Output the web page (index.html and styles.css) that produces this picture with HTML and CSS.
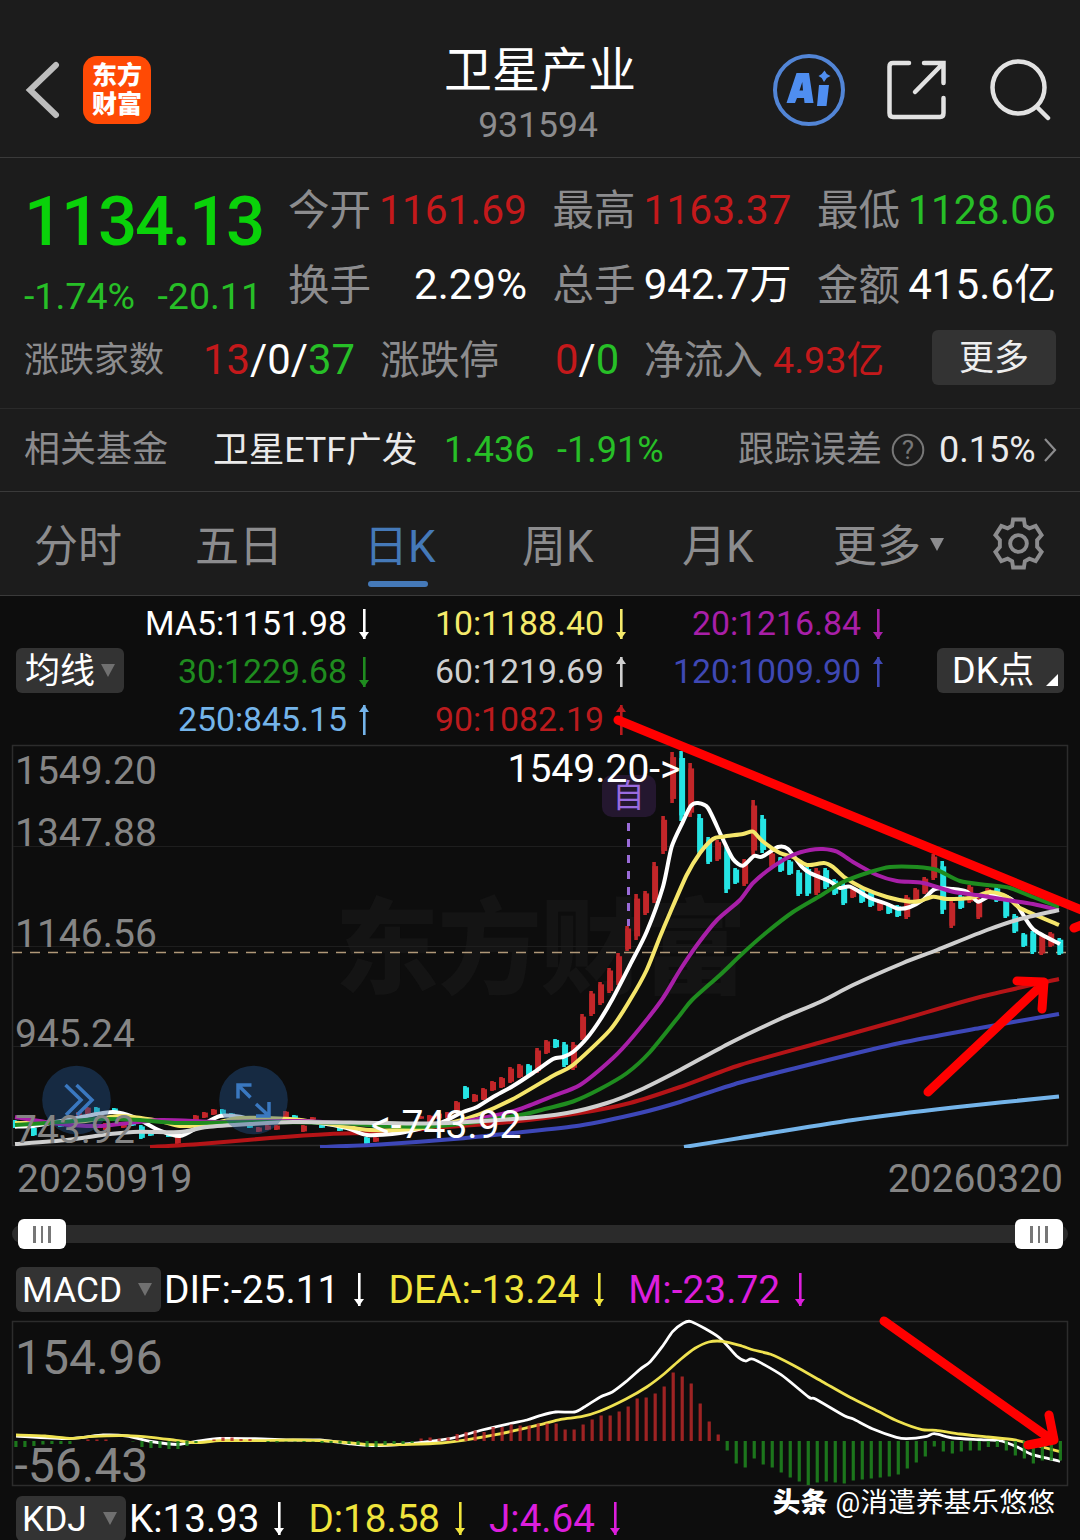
FILE: index.html
```
<!DOCTYPE html>
<html lang="zh-CN">
<head>
    <meta charset="UTF-8">
    <meta name="viewport" content="width=device-width, initial-scale=1.0">
    <title>卫星产业 931594</title>
    <link rel="stylesheet" href="styles.css">
</head>
<body>

<div class="app">
    <header class="header">
        <div class="header-left">
            <svg class="back" viewBox="0 0 36 58"><path d="M32 4 L6 29 L32 54"/></svg>
            <div class="logo"><span>东方</span><span>财富</span></div>
        </div>
        <div class="header-title">
            <h1>卫星产业</h1>
            <p>931594</p>
        </div>
        <div class="header-right">
            <svg class="icon-ai" viewBox="0 0 74 74">
                <circle cx="37" cy="37" r="34"/>
                <path d="M14.500 50 L24.500 20 H37 L41.500 50 H32.500 L32 45 H25 L23 50 Z M27.500 37.500 H31 L30.300 29 Z" fill-rule="evenodd"/>
                <path d="M47 32 H57 L54.500 53 H45 Z"/>
                <path d="M52.500 17.500 L54.800 21 L58.500 23 L54.800 25 L52 29 L49.700 25 L46.500 23 L49.700 21 Z"/>
            </svg>
            <svg class="icon-share" viewBox="0 0 60 60">
                <path d="M22 3 H6 Q2.500 3 2.500 6.500 V53 Q2.500 57 6 57 H53 Q56.500 57 56.500 53 V38"/>
                <path d="M37 3 H56.500 V23 M56 3.500 L28 32"/>
            </svg>
            <svg class="icon-search" viewBox="0 0 62 62">
                <circle cx="28.500" cy="28.500" r="26"/>
                <path d="M47 48 L58 59"/>
            </svg>
        </div>
    </header>

    <section class="quote">
        <div class="quote-top">
            <div class="price">
                <div class="price-now">1134.13</div>
                <div class="price-change"><span>-1.74%</span><span>-20.11</span></div>
            </div>
            <div class="stats">
                <div class="stat"><label>今开</label><span class="red">1161.69</span></div>
                <div class="stat"><label>最高</label><span class="red">1163.37</span></div>
                <div class="stat"><label>最低</label><span class="green">1128.06</span></div>
                <div class="stat"><label>换手</label><span class="big">2.29%</span></div>
                <div class="stat"><label>总手</label><span class="big">942.7万</span></div>
                <div class="stat"><label>金额</label><span class="big">415.6亿</span></div>
            </div>
        </div>
        <div class="quote-bottom">
            <label class="small">涨跌家数</label>
            <span><b class="red">13</b>/0/<b class="green">37</b></span>
            <label>涨跌停</label>
            <span><b class="red">0</b>/<b class="green">0</b></span>
            <label>净流入</label>
            <span class="red flow">4.93亿</span>
            <button class="more">更多</button>
        </div>
    </section>

    <section class="fund">
        <label>相关基金</label>
        <span>卫星ETF广发</span>
        <span class="green">1.436</span>
        <span class="green">-1.91%</span>
        <label>跟踪误差</label>
        <svg class="icon-help" viewBox="0 0 34 34"><circle cx="17" cy="17" r="15.300"/><text x="17" y="26" text-anchor="middle">?</text></svg>
        <span>0.15%</span>
        <svg class="icon-next" viewBox="0 0 14 26"><path d="M2 2 L12 13 L2 24"/></svg>
    </section>

    <nav class="tabs">
        <a>分时</a>
        <a>五日</a>
        <a class="active">日K</a>
        <a>周K</a>
        <a>月K</a>
        <a>更多<i class="caret"></i></a>
        <svg class="icon-gear" viewBox="0 0 54 54">
            <path d="M21.500 2.500 H32.500 L33.500 9 L38 11.500 L44.500 9 L50.500 18.500 L46 23.500 V30.500 L50.500 35.500 L44.500 45 L38 42.500 L33.500 45 L32.500 51.500 H21.500 L20.500 45 L16 42.500 L9.500 45 L3.500 35.500 L8 30.500 V23.500 L3.500 18.500 L9.500 9 L16 11.500 L20.500 9 Z"/>
            <circle cx="27" cy="27" r="8.500"/>
        </svg>
    </nav>

    <section class="ma">
        <button class="pick">均线<i class="caret"></i></button>
        <div class="ma-list">
            <span class="ma5">MA5:1151.98<i class="arrow down"></i></span>
            <span class="ma10">10:1188.40<i class="arrow down"></i></span>
            <span class="ma20">20:1216.84<i class="arrow down"></i></span>
            <span class="ma30">30:1229.68<i class="arrow down"></i></span>
            <span class="ma60">60:1219.69<i class="arrow up"></i></span>
            <span class="ma120">120:1009.90<i class="arrow up"></i></span>
            <span class="ma250">250:845.15<i class="arrow up"></i></span>
            <span class="ma90">90:1082.19<i class="arrow up"></i></span>
        </div>
        <button class="pick dk">DK点<i class="corner"></i></button>
    </section>

    <svg class="chart" id="kline" viewBox="0 744 1080 404">
        <text class="watermark" x="335" y="986" textLength="412">东方财富</text>
        <rect class="frame" x="12.500" y="745.500" width="1055" height="400"/>
        <path class="grid" d="M13 846.500 H1067 M13 946.500 H1067 M13 1046.500 H1067"/>
        <path class="last-price" d="M12 952.500 H1067"/>
        <g class="self">
            <rect x="602" y="775" width="54" height="42" rx="10"/>
            <text x="612.500" y="806.500">自</text>
            <path d="M628.500 823 V926"/>
        </g>
        <g id="candles"></g>
        <g id="lines"></g>
        <g class="fab">
            <circle cx="76.500" cy="1100" r="34.300"/>
            <path d="M65.500 1085 L81 1100 L66 1115 M76.500 1085 L92 1100 L77 1115"/>
            <circle cx="253.500" cy="1100" r="34.300"/>
            <path d="M238 1098.500 V1085 H251.500 M239 1086 L250.500 1097.500 M256 1104 L268.500 1115.500 M256 1116 H269 V1102"/>
        </g>
        <g class="axis">
            <text x="15" y="784">1549.20</text>
            <text x="15" y="846">1347.88</text>
            <text x="15" y="947">1146.56</text>
            <text x="15" y="1047">945.24</text>
            <text x="15" y="1143">743.92</text>
        </g>
        <g class="mark">
            <text x="507.500" y="782">1549.20-&gt;</text>
            <text x="371" y="1138">&lt;-743.92</text>
        </g>
    </svg>

    <div class="dates"><span>20250919</span><span>20260320</span></div>

    <div class="slider">
        <div class="handle"><i></i><i></i><i></i></div>
        <div class="handle"><i></i><i></i><i></i></div>
    </div>

    <div class="indicator">
        <button class="pick macd">MACD<i class="caret"></i></button>
        <span class="white">DIF:-25.11<i class="arrow down"></i></span>
        <span class="yellow">DEA:-13.24<i class="arrow down"></i></span>
        <span class="pink">M:-23.72<i class="arrow down"></i></span>
    </div>

    <svg class="chart" id="macd" viewBox="0 1318 1080 170">
        <rect class="frame" x="12.500" y="1321.500" width="1055" height="164"/>
        <g id="macdLines"></g>
        <g id="macdBars"></g>
        <g class="axis big">
            <text x="15" y="1374">154.96</text>
            <text x="14.500" y="1481.500">-56.43</text>
        </g>
    </svg>

    <div class="indicator kdj">
        <button class="pick">KDJ<i class="caret"></i></button>
        <span class="white">K:13.93<i class="arrow down"></i></span>
        <span class="yellow">D:18.58<i class="arrow down"></i></span>
        <span class="pink">J:4.64<i class="arrow down"></i></span>
    </div>

    <!-- hand drawn marks on top of the charts -->
    <svg class="notes" viewBox="0 0 1080 1540">
        <path d="M618 720 L1084 911"/>
        <path d="M1074 928 L1084 924"/>
        <path d="M928 1092 L1043 984 M1017 981 L1044 982 L1042 1009"/>
        <path d="M884 1321 L1052 1440 M1049 1415 L1054 1440 L1028 1445"/>
    </svg>
    <div class="credit"><b>头条</b> @消遣养基乐悠悠</div>
</div>

<script>
    const NS = "http://www.w3.org/2000/svg";
    const X0 = 15.8;
    const STEP = 9.004;

    // [index, high, low, up]
    const candles = [
        [0,1120,1128,0],[1,1122,1127,1],[2,1127,1136,0],[5,1122,1127,0],[7,1112,1118,1],[8,1107,1114,1],
        [9,1107,1115,0],[10,1123,1130,1],[11,1108,1113,0],[12,1123,1128,1],[13,1120,1126,0],[14,1125,1139,0],
        [15,1131,1136,0],[17,1134,1137,0],[18,1136,1144,1],[19,1119,1122,1],[20,1115,1121,1],[21,1112,1118,1],
        [22,1109,1115,1],[23,1109,1116,0],[24,1113,1118,0],[26,1125,1128,0],[27,1127,1132,1],[28,1125,1130,1],
        [29,1125,1130,1],[30,1111,1118,1],[31,1115,1120,0],[32,1125,1132,1],[33,1117,1120,1],[34,1125,1128,0],
        [36,1127,1131,0],[39,1137,1144,0],[40,1137,1142,1],[45,1116,1119,1],[46,1115,1122,1],[47,1113,1119,1],
        [48,1112,1118,1],[49,1101,1113,1],[50,1086,1099,0],[51,1094,1102,1],[52,1088,1100,1],[53,1081,1091,1],
        [54,1077,1088,1],[55,1067,1083,1],[56,1064,1078,1],[57,1064,1077,0],[58,1048,1073,1],[59,1040,1054,1],
        [60,1039,1048,0],[61,1042,1067,0],[62,1042,1070,1],[63,1014,1040,1],[64,991,1016,1],[65,982,1005,1],
        [66,968,993,1],[67,953,985,1],[68,926,951,1],[69,894,940,1],[70,891,915,1],[71,862,903,1],
        [72,816,854,1],[73,752,803,1],[74,751,821,0],[75,763,817,1],[76,814,855,0],[77,837,864,0],
        [78,840,861,1],[79,847,893,0],[80,868,884,0],[81,859,886,1],[82,800,855,1],[83,815,853,0],
        [84,852,867,1],[85,857,872,0],[86,860,875,0],[87,870,896,0],[88,866,896,0],[89,868,895,1],
        [90,868,889,0],[91,879,895,0],[92,883,905,0],[93,887,898,1],[94,888,903,0],[95,892,907,0],
        [96,900,911,1],[97,903,914,0],[98,905,917,0],[99,895,919,1],[100,888,903,1],[101,877,894,1],
        [102,854,880,1],[103,861,914,0],[104,900,928,1],[105,895,909,0],[106,885,903,1],[107,898,919,1],
        [108,888,898,1],[109,887,902,0],[110,898,918,0],[111,914,933,0],[112,933,947,0],[113,931,954,0],
        [114,935,955,1],[115,932,947,1],[116,938,955,0]
    ];

    const maLines = {
        ma250: [684,1147, 740,1138, 853,1120, 953,1107.5, 1059,1096.5],
        ma120: [320,1147, 380,1144.5, 460,1138.5, 513,1133, 580,1125.5, 640,1113, 680,1102, 740,1082.5, 820,1062, 900,1043, 980,1028, 1059,1014],
        ma90: [150,1147, 200,1144, 270,1138, 330,1134, 380,1132.5, 447,1127, 513,1121.7, 580,1113, 630,1103, 680,1087, 740,1065, 820,1042.5, 900,1020, 980,997, 1059,979],
        ma5: [15,1126.7, 33,1126, 50,1123, 77,1118, 97,1114, 113,1112, 127,1114.7, 140,1120, 160,1130.7, 180,1136, 200,1126, 220,1116, 240,1116.7, 260,1121.7, 283,1120, 320,1123, 347,1128, 367,1135, 400,1133, 437,1124, 447,1120, 463,1112, 477,1107, 493,1097, 513,1086, 533,1073, 553,1059, 563,1057, 573,1052, 587,1038, 600,1020, 613,998, 630,965, 646.7,931.7, 663,886.7, 671.7,846.7, 683,821.7, 690.7,806, 698,803, 708,808, 721.7,836.7, 733,859, 743,865.7, 754,856, 762,856.7, 778,847, 788,849, 801.7,866.7, 810,873, 830,881.5, 840,888, 850,886.7, 870,898, 887,904, 898,908.7, 910,907, 923,900, 935,889, 953,889, 967,891.7, 978,901.7, 990,896, 1007,897, 1017,905, 1033,929, 1060,944],
        ma10: [15,1123, 77,1122, 120,1116, 160,1121, 180,1126, 210,1124, 240,1118, 290,1119, 330,1124, 370,1130, 413,1129, 450,1123, 480,1114, 513,1099, 553,1075.7, 573,1065, 610,1030, 630,1000, 646.7,970, 660,936.7, 670,913, 686.7,875, 700,853, 713,839, 723,836.7, 743,834, 753,831.7, 762,840.7, 780,853, 793,857, 807,865, 824,863, 833,867, 845,877.7, 863,888, 887,897, 910,901.7, 920,901, 933,896.7, 947,899, 970,898, 990,892, 1007,896.7, 1020,908, 1059,925],
        ma20: [15,1117, 60,1124, 100,1126, 160,1120, 220,1122, 300,1121, 400,1126, 450,1124, 497,1115, 520,1109, 553,1096, 580,1085, 613,1058, 633,1036.5, 661.7,1000, 680,970, 697,945, 717,920, 740,900, 753,883, 773,866.7, 793,855, 810,850, 823,849, 837,851.7, 853,862, 877,875, 897,881, 923,883, 953,891.7, 977,895, 1007,900, 1033,904, 1059,910],
        ma30: [15,1125, 60,1122, 100,1119, 140,1120, 180,1123, 260,1122, 340,1123, 380,1126, 440,1126, 520,1115, 547,1108.5, 573,1101.5, 600,1089, 627,1073, 650,1052, 680,1015, 692,1000, 720,975, 743,953, 767,932, 793,912, 820,896, 843,882, 870,872, 890,867, 917,867, 937,870, 960,881, 987,885, 1010,888, 1033,897, 1059,907],
        ma60: [15,1144, 67,1140, 110,1134, 140,1131.7, 180,1132, 207,1127, 250,1124, 293,1122, 367,1122.7, 430,1123.5, 513,1119, 567,1113, 607,1103, 640,1090, 680,1070, 730,1043, 780,1019, 820,1002, 853,985, 903,963, 937,950, 987,930, 1020,919, 1059,910]
    };

    const macdLines = {
        dif: [16,1436, 69,1438.5, 103,1435, 127,1436, 151,1441.5, 178,1444.5, 196,1441.5, 220,1438.5, 255,1438.7, 293,1440, 320,1440, 348,1443.5, 372,1445.5, 406,1444, 430,1441.5, 455,1437.5, 482,1430, 510,1423.5, 527,1420, 540,1415.7, 555.5,1412, 574.4,1412, 584.8,1406.7, 600.3,1397, 612.3,1392, 626,1381.7, 640,1369.3, 650.2,1361.7, 662.2,1346.7, 672.6,1331.7, 682,1324, 691.5,1321.7, 719,1337.3, 736.3,1355.7, 745.6,1361, 753.5,1359.3, 781,1374.7, 808.6,1397, 815.5,1399, 844.8,1416, 853.4,1419, 872.3,1428.7, 896.4,1437.3, 906.7,1438.7, 925.7,1436.7, 934.3,1433.7, 953.2,1438, 980.8,1439.7, 1001.4,1441, 1018.7,1447.7, 1032.4,1454.7, 1060,1461.3],
        dea: [16,1435, 45,1436, 72,1438.3, 93,1436.3, 127,1435.7, 151,1437.3, 176,1440.3, 196,1442.7, 220,1440.7, 255,1440.7, 293,1440, 320,1440.7, 348,1442.7, 372,1444.7, 410,1444.3, 441,1443, 475,1438.3, 510,1431.7, 540,1424.7, 560.7,1419.3, 581.3,1416.7, 600.3,1411, 626,1399, 646.7,1387, 664,1374, 681,1359, 695,1348.3, 708.7,1342, 722.5,1341.3, 739.7,1345.3, 753.5,1350, 770.7,1354.3, 791.4,1364.3, 822.4,1381.7, 850,1397.3, 877.5,1411, 898,1421.3, 922,1429.7, 936,1430.3, 960,1434, 987.7,1437, 1015,1440, 1039,1446, 1060,1451.7]
    };

    // bar heights in px, positive above the zero line
    const macdBars = [
        -6,-6,-5,-3.5,-3,-3,-3,0,1.5,1.5,1.5,0,0,-0.5,-6,-7,-7,-8,-8,-5,
        -2,0,1.5,3.5,3.5,2,2,0,-1,-1.5,-0.5,-0.5,-1,-0.5,-2,-2,-2.5,-3,-4,-6,
        -6,-4,-3,-3,-2,2.5,3.5,2.5,3.5,7,9,10.5,9,14,14,16.5,15.5,15.5,17.5,17.5,
        17.5,11.5,11.5,16.5,21.5,25.5,25.5,29.5,34.5,42.5,43.5,47.5,54.5,68.5,64.5,57.5,37.5,19.5,6.5,-9.5,
        -22.5,-26.5,-17.5,-23.5,-26.5,-31.5,-36.5,-40.5,-44,-41.5,-40.5,-41.5,-42.5,-39.5,-38.5,-37.5,-36.5,-35.5,-33.5,-27.5,
        -21.5,-15.5,-5.5,-10.5,-12.5,-10.5,-9.5,-9.5,-6,-6,-9.5,-14.5,-17.5,-22.5,-19.5,-19.5,-19.5
    ];

    function add(parentId, tag, attrs) {
        const el = document.createElementNS(NS, tag);
        for (const key in attrs) {
            el.setAttribute(key, attrs[key]);
        }
        document.getElementById(parentId).appendChild(el);
    }

    // Smooth curve through a flat list of x, y pairs
    function curve(p) {
        const n = p.length / 2;
        const pt = i => {
            const k = Math.max(0, Math.min(n - 1, i));
            return [p[k * 2], p[k * 2 + 1]];
        };
        let d = `M${p[0]} ${p[1]}`;
        for (let i = 0; i < n - 1; i++) {
            const [a, b, c, e] = [pt(i - 1), pt(i), pt(i + 1), pt(i + 2)];
            d += ` C${b[0] + (c[0] - a[0]) / 8} ${b[1] + (c[1] - a[1]) / 8}`
               + ` ${c[0] - (e[0] - b[0]) / 8} ${c[1] - (e[1] - b[1]) / 8} ${c[0]} ${c[1]}`;
        }
        return d;
    }

    candles.forEach(([i, high, low, up]) => {
        const x = X0 + i * STEP;
        const h = low - high;
        const cls = up ? "up" : "fall";
        add("candles", "rect", { class: cls, x: x - 2.8, y: high, width: 3.6, height: h });
        add("candles", "rect", { class: cls, x: x - 2.8, y: high + h * 0.1, width: 5.8, height: h * 0.82 });
    });

    for (const name in maLines) {
        add("lines", "path", { class: "line " + name, d: curve(maLines[name]) });
    }

    for (const name in macdLines) {
        add("macdLines", "path", { class: "line " + name, d: curve(macdLines[name]) });
    }

    macdBars.forEach((v, i) => {
        if (v === 0) return;
        add("macdBars", "rect", {
            class: v > 0 ? "bar-up" : "bar-down",
            x: X0 + i * STEP - 1.5,
            y: v > 0 ? 1441 - v : 1441,
            width: 3.2,
            height: Math.abs(v)
        });
    });
</script>

</body>
</html>
```
FILE: styles.css
```
* {
    box-sizing: border-box;
}
body {
    margin: 0;
    background-color: #0d0d0d;
    color: #fff;
    font-family: Roboto, "Noto Sans CJK SC", sans-serif;
}
h1, p {
    margin: 0;
    font-weight: normal;
}
b {
    font-weight: normal;
}
button {
    border: none;
    padding: 0;
    color: #fff;
    font-family: inherit;
    background-color: #333;
    border-radius: 6px;
}
svg {
    display: block;
    fill: none;
}
label {
    color: #8c8c8e;
}
.app {
    position: relative;
    width: 1080px;
    height: 1540px;
    overflow: hidden;
}
.red { color: #c4191b; }
.green { color: #27bf27; }
.white { color: #fff; }
.yellow { color: #f0e43c; }
.pink { color: #dc1edc; }

/* header */
.header {
    display: grid;
    grid-template-columns: 1fr auto 1fr;
    height: 158px;
    padding: 0 28px 0 24px;
    background-color: #1c1c1c;
    border-bottom: 1px solid #3a3a3a;
}
.header-left, .header-right {
    display: flex;
    align-items: center;
    padding-top: 23px;
}
.header-right {
    justify-content: flex-end;
}
.back {
    width: 36px;
    height: 58px;
    stroke: #bdbdbd;
    stroke-width: 6;
    stroke-linecap: round;
}
.logo {
    display: flex;
    flex-direction: column;
    justify-content: center;
    width: 68px;
    height: 68px;
    margin-left: 23px;
    border-radius: 14px;
    background-color: #ff4a05;
    font-size: 25px;
    font-weight: 900;
    line-height: 29px;
    text-align: center;
}
.header-title {
    padding: 35px 0 0 4px;
    text-align: center;
}
.header-title h1 {
    font-size: 48px;
    line-height: 72px;
}
.header-title p {
    margin: -2px 4px 0 0;
    color: #8c8c8e;
    font-size: 35.5px;
    line-height: 40px;
}
.icon-ai {
    width: 74px;
    height: 74px;
    fill: #4f8ef0;
}
.icon-ai circle {
    fill: none;
    stroke: #5285d6;
    stroke-width: 4;
}
.icon-share {
    width: 60px;
    height: 60px;
    margin: 0 43px 0 41px;
    stroke: #e2e2e2;
    stroke-width: 4.5;
    stroke-linecap: round;
}
.icon-search {
    width: 62px;
    height: 62px;
    stroke: #e2e2e2;
    stroke-width: 4.5;
    stroke-linecap: round;
}

/* quote */
.quote {
    height: 251px;
    padding: 14px 24px 0;
    background-color: #1c1c1c;
    border-bottom: 1px solid #2a2a2a;
    line-height: 50px;
}
.quote-top {
    display: flex;
    height: 150px;
}
.price {
    width: 264px;
}
.price-now {
    height: 98px;
    color: #0ad20a;
    font-size: 69px;
    font-weight: 500;
    line-height: 99px;
    letter-spacing: -2.2px;
}
.price-change {
    display: flex;
    justify-content: space-between;
    width: 238px;
    color: #27bf27;
    font-size: 37.5px;
    line-height: 52px;
}
.stats {
    display: grid;
    grid-template-columns: repeat(3, 239px);
    grid-auto-rows: 75px;
    column-gap: 25.5px;
}
.stat {
    display: flex;
    justify-content: space-between;
    align-items: center;
    font-size: 40.7px;
    white-space: nowrap;
}
.stat .big {
    font-size: 42.1px;
}
.stat label {
    padding-top: 3px;
    font-size: 41.5px;
}
.quote-bottom {
    display: grid;
    grid-template-columns: 179px 177px 175px 89px 129px 159px 124px;
    align-items: center;
    height: 74px;
    padding-top: 1px;
    font-size: 41.8px;
    white-space: nowrap;
}
.quote-bottom label {
    padding-top: 3px;
    font-size: 39.7px;
}
.quote-bottom .small {
    font-size: 35px;
}
.quote-bottom .flow {
    font-size: 37.7px;
}
.more {
    height: 55px;
    margin-top: -5px;
    padding-top: 1px;
    font-size: 35px;
    line-height: 55px;
    color: #eee;
}

/* related fund */
.fund {
    display: grid;
    grid-template-columns: 189px 231px 113px 181px 153px 48px 104px 14px;
    align-items: center;
    height: 83px;
    padding: 0 0 1px 24px;
    background-color: #1c1c1c;
    border-bottom: 1px solid #3a3a3a;
    color: #eaeaea;
    font-size: 36px;
    line-height: 50px;
    white-space: nowrap;
}
.fund .green {
    color: #27bf27;
}
.fund label {
    padding-top: 1px;
    font-size: 36px;
}
.fund label + span {
    padding-top: 1px;
    font-size: 35.7px;
}
.icon-help {
    width: 34px;
    height: 34px;
    stroke: #777;
    stroke-width: 2;
}
.icon-help text {
    fill: #777;
    stroke: none;
    font-size: 26px;
}
.icon-next {
    width: 14px;
    height: 26px;
    stroke: #8c8c8e;
    stroke-width: 2.2;
}

/* tabs */
.tabs {
    display: grid;
    grid-template-columns: 161px 169px 158px 160px 151px 159px 54px;
    align-items: center;
    height: 104px;
    padding-left: 34px;
    background-color: #1c1c1c;
    border-bottom: 1px solid #3a3a3a;
    color: #8c8c8e;
    font-size: 44px;
}
.tabs a {
    position: relative;
    padding-top: 6px;
    line-height: 64px;
    white-space: nowrap;
}
.tabs .active {
    color: #4579b8;
}
.tabs .active::after {
    content: "";
    position: absolute;
    left: 4px;
    bottom: -8px;
    width: 60px;
    height: 6px;
    border-radius: 3px;
    background-color: #4579b8;
}
.caret {
    display: inline-block;
    border: 7px solid transparent;
    border-top: 13px solid #8c8c8e;
    border-bottom: none;
}
.tabs .caret {
    margin-left: 9px;
    vertical-align: 11px;
}
.icon-gear {
    width: 53px;
    height: 53px;
    stroke: #8c8c8e;
    stroke-width: 4;
}

/* moving averages */
.ma {
    display: flex;
    align-items: center;
    height: 148px;
    padding: 0 16px;
    font-size: 33.8px;
}
.pick {
    display: flex;
    align-items: center;
    justify-content: space-between;
    width: 108px;
    height: 45px;
    padding: 3px 9px 0;
    font-size: 35px;
    line-height: 43px;
}
.pick .caret {
    margin-top: -3px;
    border-top-color: #707070;
}
.dk {
    position: relative;
    width: 127px;
    margin-left: auto;
    padding: 2px 15px 0;
    font-size: 36px;
}
.corner {
    position: absolute;
    right: 6px;
    bottom: 7px;
    border-left: 12px solid transparent;
    border-bottom: 12px solid #fff;
}
.ma-list {
    display: grid;
    grid-template-columns: 246px 257px 257px;
    grid-auto-rows: 48px;
    padding-top: 3px;
}
.ma-list span {
    display: flex;
    align-items: center;
    justify-content: flex-end;
}
.ma5 { color: #fff; stroke: #fff; }
.ma10 { color: #f5ea6b; stroke: #f5e66b; }
.ma20 { color: #a81fa8; stroke: #a81fa8; }
.ma30 { color: #1f8c1f; stroke: #1f8c1f; }
.ma60 { color: #cfcfcf; stroke: #cfcfcf; }
.ma90 { color: #bb1b1e; stroke: #b51417; }
.ma120 { color: #3f48b4; stroke: #3d47b8; }
.ma250 { color: #74b4ea; stroke: #74b4ea; }
.arrow {
    position: relative;
    display: inline-block;
    width: 12px;
    height: 30px;
    margin-left: 11px;
    background: linear-gradient(currentColor, currentColor) center / 2.6px 100% no-repeat;
}
.arrow::after {
    content: "";
    position: absolute;
    left: 1px;
    border: 5px solid transparent;
}
.arrow.down::after {
    bottom: 0;
    border-top: 7px solid currentColor;
    border-bottom: none;
}
.arrow.up::after {
    top: 0;
    border-bottom: 7px solid currentColor;
    border-top: none;
}

/* charts */
.chart {
    width: 1080px;
}
#kline {
    height: 404px;
}
#macd {
    height: 170px;
}
.frame {
    stroke: #2c2c2c;
    stroke-width: 1.5;
}
.grid {
    stroke: #1e1e1e;
}
.watermark {
    fill: #141414;
    font-size: 104px;
    font-weight: 900;
}
.last-price {
    stroke: #b09878;
    stroke-width: 1.3;
    stroke-dasharray: 10 8;
}
.self rect {
    fill: #24172f;
}
.self text {
    fill: #9a6be0;
    font-size: 32px;
}
.self path {
    stroke: #9a6bd8;
    stroke-width: 3;
    stroke-dasharray: 8 8;
}
.up { fill: #c22629; }
.fall { fill: #25e4e4; }
.line {
    stroke-width: 4;
    stroke-linejoin: round;
}
.dif, .dea {
    stroke-width: 2.8;
}
.dif { stroke: #fff; }
.dea { stroke: #efe250; }
.bar-up { fill: rgba(184, 40, 40, 0.85); }
.bar-down { fill: rgba(30, 130, 30, 0.9); }
.fab circle {
    fill: rgba(38, 88, 148, 0.4);
}
.fab path {
    stroke: #3a78c0;
    stroke-width: 3.5;
}
.axis text {
    fill: #858585;
    font-size: 39px;
}
.axis.big text {
    font-size: 48px;
}
.mark text {
    fill: #fff;
    font-size: 39px;
}
.dates {
    display: flex;
    justify-content: space-between;
    padding: 0 17px 0 17px;
    height: 62px;
    color: #858585;
    font-size: 39px;
    line-height: 62px;
}

/* range slider */
.slider {
    display: flex;
    justify-content: space-between;
    align-items: center;
    height: 18px;
    margin: 15px 12px 0;
    padding: 0 5px 0 6px;
    border-radius: 9px;
    background-color: #2b2b2b;
}
.handle {
    display: flex;
    justify-content: center;
    align-items: center;
    gap: 5px;
    width: 48px;
    height: 30px;
    border-radius: 6px;
    background-color: #fff;
}
.handle i {
    width: 2.5px;
    height: 17px;
    background-color: #777;
}

/* indicator legends */
.indicator {
    display: flex;
    align-items: center;
    height: 45px;
    margin: 24px 0 6px 16px;
    font-size: 38.9px;
}
.indicator span {
    display: flex;
    align-items: center;
    margin: -1px 20px 0 3px;
    white-space: nowrap;
}
.indicator .arrow {
    height: 33px;
    margin-left: 14px;
}
.indicator .pick {
    width: 110px;
    padding: 2px 9px 0 6px;
    font-size: 35.3px;
}
.indicator .macd {
    width: 145px;
}
.kdj {
    margin-top: 8px;
    font-size: 38.6px;
}

.notes {
    position: absolute;
    top: 0;
    left: 0;
    width: 1080px;
    height: 1540px;
    stroke: #ff0000;
    stroke-width: 9;
    stroke-linecap: round;
    stroke-linejoin: round;
}
.credit {
    position: absolute;
    right: 25px;
    bottom: 17px;
    font-size: 27.5px;
    line-height: 40px;
    letter-spacing: 0.3px;
}
.credit b {
    font-weight: 900;
}
```
